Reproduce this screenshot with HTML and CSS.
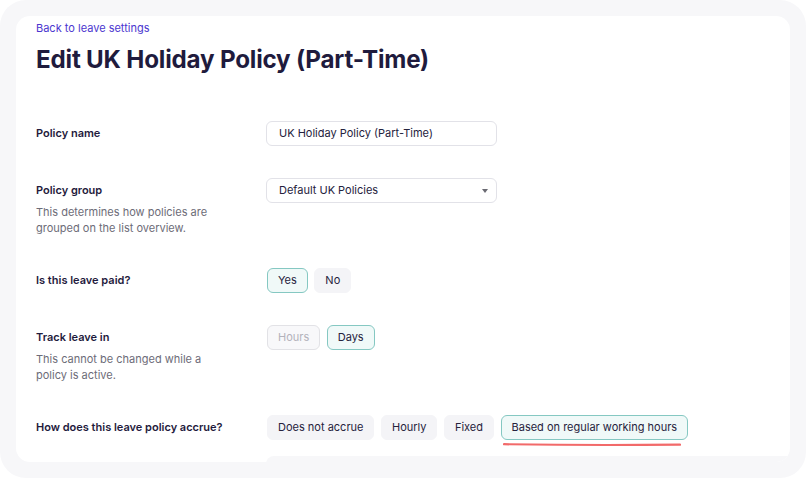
FILE: index.html
```html
<!DOCTYPE html>
<html lang="en">
<head>
<meta charset="utf-8">
<title>Edit UK Holiday Policy (Part-Time)</title>
<link rel="stylesheet" href="styles.css">
</head>
<body>
<div class="frame">
  <div class="card">
    <a class="back" href="#">Back to leave settings</a>
    <h1 class="title">Edit UK Holiday Policy (Part-Time)</h1>
    <div class="form">
      <div class="row">
        <div class="label-col"><div class="label">Policy name</div></div>
        <div class="control-col">
          <div class="input">UK Holiday Policy (Part-Time)</div>
        </div>
      </div>
      <div class="row">
        <div class="label-col">
          <div class="label">Policy group</div>
          <div class="desc">This determines how policies are<br>grouped on the list overview.</div>
        </div>
        <div class="control-col">
          <div class="input select">Default UK Policies<span class="caret"></span></div>
        </div>
      </div>
      <div class="row">
        <div class="label-col"><div class="label">Is this leave paid?</div></div>
        <div class="control-col">
          <div class="choices">
            <span class="chip selected">Yes</span>
            <span class="chip">No</span>
          </div>
        </div>
      </div>
      <div class="row">
        <div class="label-col">
          <div class="label">Track leave in</div>
          <div class="desc">This cannot be changed while a<br>policy is active.</div>
        </div>
        <div class="control-col">
          <div class="choices">
            <span class="chip disabled">Hours</span>
            <span class="chip selected">Days</span>
          </div>
        </div>
      </div>
      <div class="row">
        <div class="label-col"><div class="label">How does this leave policy accrue?</div></div>
        <div class="control-col">
          <div class="choices">
            <span class="chip">Does not accrue</span>
            <span class="chip">Hourly</span>
            <span class="chip">Fixed</span>
            <span class="chip selected marked">Based on regular working hours<svg class="underline" width="178" height="5" viewBox="0 0 178 5"><path d="M1 2.2 Q89 3.6 177 2.6" stroke="#f26a6a" stroke-width="2.2" fill="none" stroke-linecap="round"/></svg></span>
          </div>
          <div class="subpanel"></div>
        </div>
      </div>
    </div>
  </div>
</div>
</body>
</html>
```

FILE: styles.css
```css
* { box-sizing: border-box; }
html, body { margin: 0; padding: 0; background: #ffffff; }
body { font-family: Inter, "Noto Sans", sans-serif; color: #1f1b3d; }

.frame {
  width: 806px;
  height: 478px;
  background: #f7f7f9;
  border-radius: 26px;
  padding: 16px;
}

.card {
  background: #ffffff;
  border-radius: 14px;
  height: 446px;
  width: 774px;
  overflow: hidden;
  padding: 5px 20px 0 20px;
}

.back {
  display: block;
  font-size: 11px;
  line-height: 14px;
  color: #4b36cf;
  text-decoration: none;
}

.title {
  margin: 10px 0 0 0;
  font-size: 24.2px;
  line-height: 30px;
  font-weight: 700;
  color: #1f1b3d;
  letter-spacing: -0.2px;
}

.form {
  margin-top: 46px;
  display: flex;
  flex-direction: column;
  gap: 32px;
}

.row {
  display: grid;
  grid-template-columns: 230px 1fr;
}

.label {
  font-size: 11px;
  line-height: 25px;
  font-weight: 600;
  color: #1f1b3d;
}

.desc {
  font-size: 11px;
  line-height: 16px;
  color: #6d6c78;
  margin-top: 1px;
}

.input {
  width: 231px;
  height: 25px;
  border: 1px solid #e2e2e8;
  border-radius: 6px;
  font-size: 11px;
  line-height: 23px;
  padding-left: 12px;
  color: #25223d;
  position: relative;
}

.caret {
  position: absolute;
  right: 8px;
  top: 10px;
  width: 0;
  height: 0;
  border-left: 3.5px solid transparent;
  border-right: 3.5px solid transparent;
  border-top: 4px solid #6a6a72;
}

.choices {
  display: flex;
  gap: 6.5px;
  padding-left: 1px;
}

.chip {
  position: relative;
  height: 25px;
  padding: 0 10px;
  border-radius: 6px;
  background: #f4f4f7;
  border: 1.5px solid #f4f4f7;
  font-size: 11px;
  line-height: 22px;
  color: #26233d;
  white-space: nowrap;
}

.chip.selected {
  background: #f0f9f8;
  border-color: #85c8c2;
}

.chip.disabled {
  background: #f8f8fa;
  border-color: #e2e2e6;
  color: #b3b2bb;
}

.underline {
  position: absolute;
  left: 1px;
  top: 26px;
}

.subpanel {
  margin-top: 16px;
  height: 40px;
  width: 560px;
  background: #f7f7f9;
  border-radius: 8px;
}
```
